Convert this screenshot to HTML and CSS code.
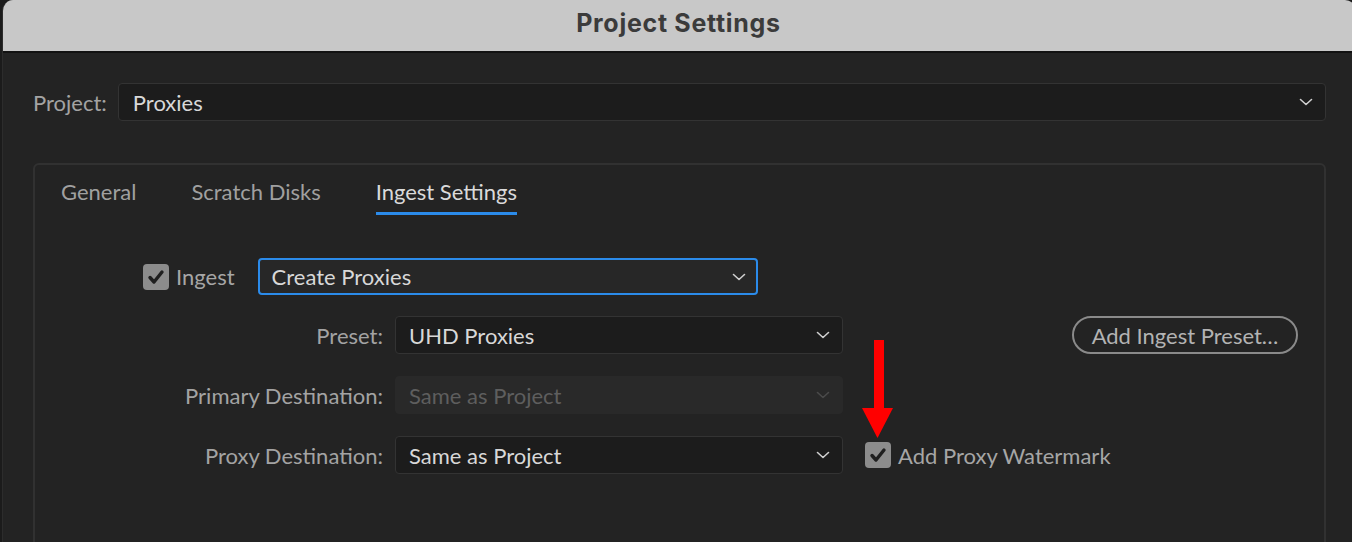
FILE: index.html
```html
<!DOCTYPE html>
<html>
<head>
<meta charset="utf-8">
<link rel="stylesheet" href="styles.css">
</head>
<body>
<div class="window">
  <div class="titlebar">Project Settings</div>
  <div class="content">
    <div class="project-row">
      <span class="label">Project:</span>
      <div class="select select-dark select-wide">
        <span class="value">Proxies</span>
        <svg class="chev" width="14" height="8" viewBox="0 0 14 8"><path d="M1.5 1.5 L7 6.5 L12.5 1.5" fill="none" stroke="#cfcfcf" stroke-width="1.6" stroke-linecap="round" stroke-linejoin="round"/></svg>
      </div>
    </div>
    <div class="panel">
      <div class="tabs">
        <div class="tab">General</div>
        <div class="tab">Scratch Disks</div>
        <div class="tab active">Ingest Settings</div>
      </div>
      <div class="ingest-row">
        <span class="checkbox"><svg width="26" height="26" viewBox="0 0 26 26"><path d="M7 13.5 L11 18 L19 8" fill="none" stroke="#1f1f1f" stroke-width="3.4" stroke-linecap="round" stroke-linejoin="round"/></svg></span>
        <span class="check-label">Ingest</span>
        <div class="select select-focus">
          <span class="value">Create Proxies</span>
          <svg class="chev" width="14" height="8" viewBox="0 0 14 8"><path d="M1.5 1.5 L7 6.5 L12.5 1.5" fill="none" stroke="#cfcfcf" stroke-width="1.6" stroke-linecap="round" stroke-linejoin="round"/></svg>
        </div>
      </div>
      <div class="form-grid">
        <span class="label right">Preset:</span>
        <div class="select select-dark">
          <span class="value">UHD Proxies</span>
          <svg class="chev" width="14" height="8" viewBox="0 0 14 8"><path d="M1.5 1.5 L7 6.5 L12.5 1.5" fill="none" stroke="#cfcfcf" stroke-width="1.6" stroke-linecap="round" stroke-linejoin="round"/></svg>
        </div>
        <div class="extra end"><button class="pill">Add Ingest Preset…</button></div>

        <span class="label right">Primary Destination:</span>
        <div class="select select-disabled">
          <span class="value">Same as Project</span>
          <svg class="chev" width="14" height="8" viewBox="0 0 14 8"><path d="M1.5 1.5 L7 6.5 L12.5 1.5" fill="none" stroke="#4a4a4a" stroke-width="1.6" stroke-linecap="round" stroke-linejoin="round"/></svg>
        </div>
        <div class="extra"></div>

        <span class="label right">Proxy Destination:</span>
        <div class="select select-dark">
          <span class="value">Same as Project</span>
          <svg class="chev" width="14" height="8" viewBox="0 0 14 8"><path d="M1.5 1.5 L7 6.5 L12.5 1.5" fill="none" stroke="#cfcfcf" stroke-width="1.6" stroke-linecap="round" stroke-linejoin="round"/></svg>
        </div>
        <div class="extra watermark">
          <span class="checkbox"><svg width="26" height="26" viewBox="0 0 26 26"><path d="M7 13.5 L11 18 L19 8" fill="none" stroke="#1f1f1f" stroke-width="3.4" stroke-linecap="round" stroke-linejoin="round"/></svg></span>
          <span class="check-label">Add Proxy Watermark</span>
        </div>
      </div>
      <svg class="arrow" width="32" height="98" viewBox="0 0 32 98"><rect x="12" y="0" width="10" height="70" fill="#ff0000"/><polygon points="0,68 31,68 15.5,98" fill="#ff0000"/></svg>
    </div>
  </div>
</div>
</body>
</html>
```

FILE: styles.css
```css
html, body {
  margin: 0;
  padding: 0;
  background: #1b1b1b;
  height: 100%;
  overflow: hidden;
}
body {
  font-family: "Lato", "Liberation Sans", sans-serif;
}
.window {
  margin-left: 2px;
  width: 1354px;
  height: 560px;
  border-radius: 11px 11px 0 0;
  overflow: hidden;
  background: #232323;
  border-left: 1px solid #2c2c2c;
  box-sizing: border-box;
}
.titlebar {
  box-sizing: border-box;
  height: 53px;
  background: #c8c8c8;
  border-bottom: 2px solid #121212;
  display: flex;
  align-items: center;
  justify-content: center;
  font-family: "Inter", "Liberation Sans", sans-serif;
  font-weight: 700;
  font-size: 25px;
  letter-spacing: 0.7px;
  color: #3b3b3b;
  padding-bottom: 6px;
  padding-right: 2px;
}
.content {
  padding: 30px 30px 0 30px;
}
.project-row {
  display: flex;
  align-items: center;
  gap: 11px;
}
.label {
  font-size: 22px;
  color: #a3a3a3;
  white-space: nowrap;
}
.label.right {
  text-align: right;
}
.select {
  box-sizing: border-box;
  height: 38px;
  border-radius: 4px;
  display: flex;
  align-items: center;
  justify-content: space-between;
  padding: 0 12px 0 13px;
  font-size: 22px;
  color: #d8d8d8;
}
.select-wide {
  flex: 1;
  padding-left: 14px;
}
.select-dark {
  background: #1c1c1c;
  border: 1px solid #333333;
}
.select-focus {
  width: 500px;
  height: 37px;
  background: #272727;
  border: 2px solid #2b8bea;
  padding-left: 12px;
  padding-right: 10px;
}
.select-disabled {
  background: #292929;
  border: 1px solid #292929;
  color: #5e5e5e;
}
.chev {
  flex: none;
}
.panel {
  position: relative;
  margin-top: 42px;
  border: 2px solid #313131;
  border-radius: 6px;
  height: 500px;
  box-sizing: border-box;
}
.tabs {
  display: flex;
  gap: 55px;
  padding: 15px 0 0 26px;
}
.tab {
  font-size: 22px;
  line-height: 24px;
  color: #a0a0a0;
  padding-bottom: 8px;
  border-bottom: 3px solid transparent;
}
.tab.active {
  color: #dadada;
  border-bottom-color: #2b8bea;
}
.ingest-row {
  display: flex;
  align-items: center;
  margin-top: 43px;
  margin-left: 108px;
}
.checkbox {
  width: 26px;
  height: 26px;
  border-radius: 4px;
  background: #8c8c8c;
  display: inline-flex;
  flex: none;
}
.check-label {
  font-size: 22px;
  color: #a6a6a6;
  margin-left: 7px;
}
.ingest-row .check-label {
  margin-right: 23px;
}
.form-grid {
  display: grid;
  grid-template-columns: 348px 448px 1fr;
  column-gap: 12px;
  row-gap: 22px;
  margin-top: 21px;
  align-items: center;
  padding-right: 26px;
}
.extra {
  display: flex;
  align-items: center;
}
.extra.end {
  justify-content: flex-end;
}
.watermark {
  padding-left: 10px;
}
.pill {
  box-sizing: border-box;
  height: 38px;
  width: 226px;
  border-radius: 19px;
  border: 2px solid #8a8a8a;
  background: transparent;
  color: #b3b3b3;
  font-family: "Lato", "Liberation Sans", sans-serif;
  font-size: 22px;
  padding: 0;
}
.arrow {
  position: absolute;
  left: 827px;
  top: 175px;
}
```
